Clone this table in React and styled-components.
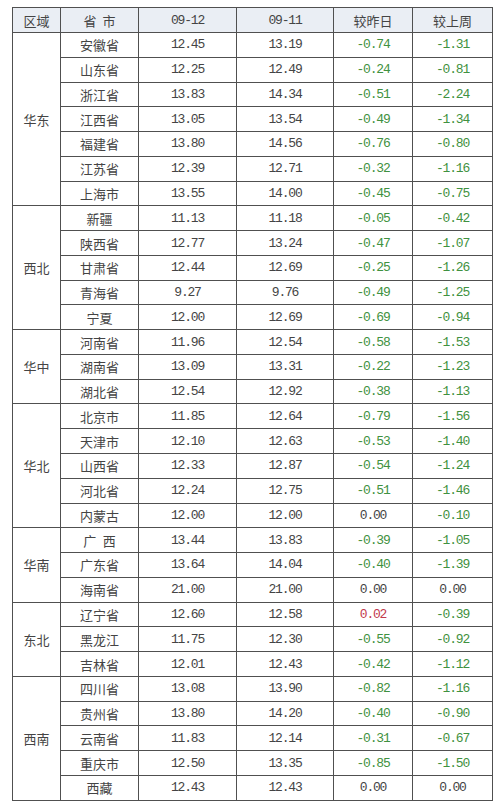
import styled, { createGlobalStyle } from 'styled-components'

const GlobalStyle = createGlobalStyle`
  html, body {
    margin: 0;
    padding: 0;
    background: #ffffff;
  }
  body {
    padding: 7px 0 0 12px;
  }
`

const Table = styled.table`
  width: 480px;
  table-layout: fixed;
  border-collapse: collapse;
  border: 1px solid #505050;
  font-family: "Noto Sans CJK SC", "Liberation Sans", sans-serif;
  font-size: 13px;
  color: #444;
`

const HeadCell = styled.th`
  height: 24px;
  padding: 0;
  font-weight: 400;
  text-align: center;
  background: #eaeef4;
  border: 1px solid #505050;
  font-family: ${p => (p.$num ? '"Liberation Mono", monospace' : 'inherit')};
  letter-spacing: ${p => (p.$num ? '-1.2px' : '0')};
`

const Row = styled.tr`
  height: 24.77px;
`

const RegionCell = styled.td`
  padding: 0;
  text-align: center;
  border: 1px solid #505050;
`

const NameCell = styled.td`
  padding: 0;
  text-align: center;
  border: 1px solid #505050;
  line-height: 1;
`

const NumCell = styled.td`
  padding: 0;
  text-align: center;
  border: 1px solid #505050;
  font-family: "Liberation Mono", monospace;
  font-size: 13px;
  letter-spacing: -1.2px;
  line-height: 1;
  color: ${p => (p.$tone === 'down' ? '#3f9140' : p.$tone === 'up' ? '#c23a4c' : '#444')};
`

const groups = [
  ['华东', [
    ['安徽省', '12.45', '13.19', '-0.74', '-1.31'],
    ['山东省', '12.25', '12.49', '-0.24', '-0.81'],
    ['浙江省', '13.83', '14.34', '-0.51', '-2.24'],
    ['江西省', '13.05', '13.54', '-0.49', '-1.34'],
    ['福建省', '13.80', '14.56', '-0.76', '-0.80'],
    ['江苏省', '12.39', '12.71', '-0.32', '-1.16'],
    ['上海市', '13.55', '14.00', '-0.45', '-0.75'],
  ]],
  ['西北', [
    ['新疆', '11.13', '11.18', '-0.05', '-0.42'],
    ['陕西省', '12.77', '13.24', '-0.47', '-1.07'],
    ['甘肃省', '12.44', '12.69', '-0.25', '-1.26'],
    ['青海省', '9.27', '9.76', '-0.49', '-1.25'],
    ['宁夏', '12.00', '12.69', '-0.69', '-0.94'],
  ]],
  ['华中', [
    ['河南省', '11.96', '12.54', '-0.58', '-1.53'],
    ['湖南省', '13.09', '13.31', '-0.22', '-1.23'],
    ['湖北省', '12.54', '12.92', '-0.38', '-1.13'],
  ]],
  ['华北', [
    ['北京市', '11.85', '12.64', '-0.79', '-1.56'],
    ['天津市', '12.10', '12.63', '-0.53', '-1.40'],
    ['山西省', '12.33', '12.87', '-0.54', '-1.24'],
    ['河北省', '12.24', '12.75', '-0.51', '-1.46'],
    ['内蒙古', '12.00', '12.00', '0.00', '-0.10'],
  ]],
  ['华南', [
    ['广\u2002西', '13.44', '13.83', '-0.39', '-1.05'],
    ['广东省', '13.64', '14.04', '-0.40', '-1.39'],
    ['海南省', '21.00', '21.00', '0.00', '0.00'],
  ]],
  ['东北', [
    ['辽宁省', '12.60', '12.58', '0.02', '-0.39'],
    ['黑龙江', '11.75', '12.30', '-0.55', '-0.92'],
    ['吉林省', '12.01', '12.43', '-0.42', '-1.12'],
  ]],
  ['西南', [
    ['四川省', '13.08', '13.90', '-0.82', '-1.16'],
    ['贵州省', '13.80', '14.20', '-0.40', '-0.90'],
    ['云南省', '11.83', '12.14', '-0.31', '-0.67'],
    ['重庆市', '12.50', '13.35', '-0.85', '-1.50'],
    ['西藏', '12.43', '12.43', '0.00', '0.00'],
  ]],
]

const tone = v => (v.startsWith('-') ? 'down' : v === '0.00' ? 'flat' : 'up')

export default function App() {
  return (
    <>
      <GlobalStyle />
      <Table>
        <colgroup>
          <col style={{ width: 48 }} />
          <col style={{ width: 78 }} />
          <col style={{ width: 98 }} />
          <col style={{ width: 97 }} />
          <col style={{ width: 79 }} />
          <col style={{ width: 80 }} />
        </colgroup>
        <thead>
          <tr>
            <HeadCell>区域</HeadCell>
            <HeadCell>省&nbsp;&nbsp;市</HeadCell>
            <HeadCell $num>09-12</HeadCell>
            <HeadCell $num>09-11</HeadCell>
            <HeadCell>较昨日</HeadCell>
            <HeadCell>较上周</HeadCell>
          </tr>
        </thead>
        <tbody>
          {groups.map(([region, rows]) =>
            rows.map((r, i) => (
              <Row key={region + r[0]}>
                {i === 0 && <RegionCell rowSpan={rows.length}>{region}</RegionCell>}
                <NameCell>{r[0]}</NameCell>
                <NumCell>{r[1]}</NumCell>
                <NumCell>{r[2]}</NumCell>
                <NumCell $tone={tone(r[3])}>{r[3]}</NumCell>
                <NumCell $tone={tone(r[4])}>{r[4]}</NumCell>
              </Row>
            ))
          )}
        </tbody>
      </Table>
    </>
  )
}
